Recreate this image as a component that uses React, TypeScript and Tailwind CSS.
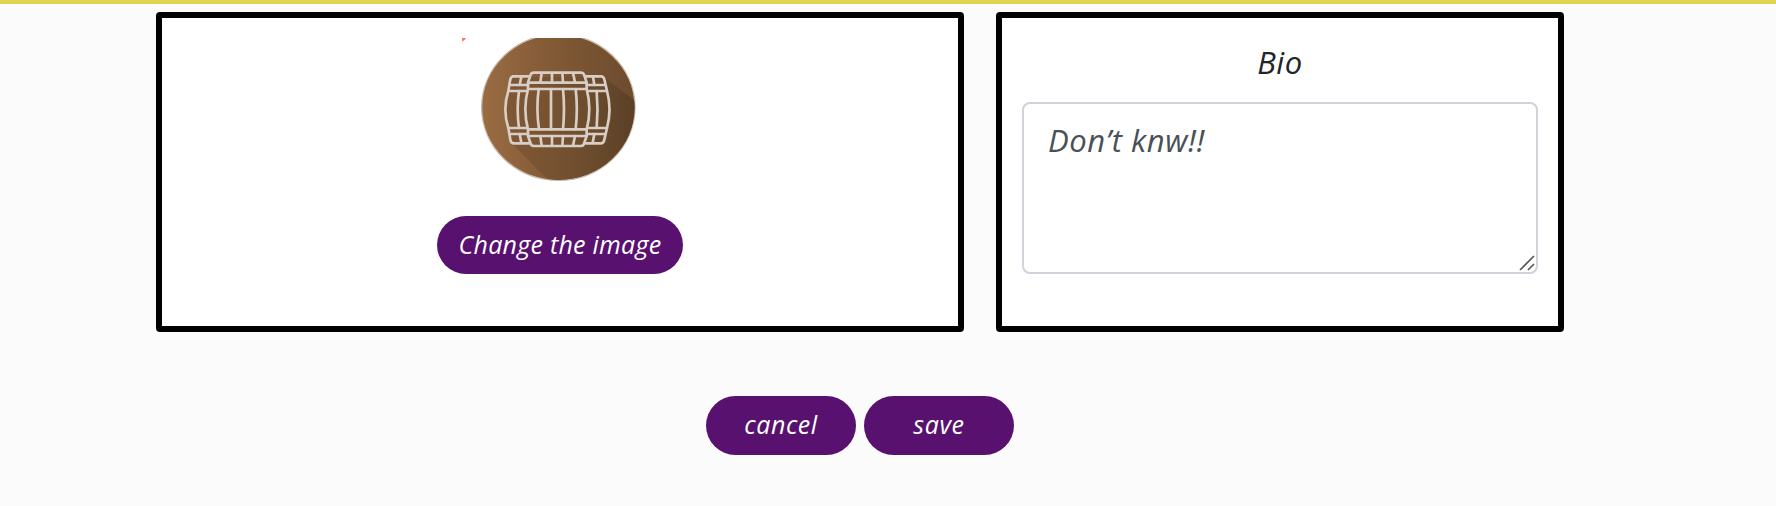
import type { ReactNode } from "react";

function BarrelBadge() {
  return (
    <svg className="block h-[146px] w-[196px] shrink-0" viewBox="66 54 588 438" fill="none">
      <defs>
        <linearGradient id="disc" x1="125" y1="0" x2="585" y2="0" gradientUnits="userSpaceOnUse">
          <stop offset="0" stopColor="#9a6c43" />
          <stop offset="0.45" stopColor="#825a36" />
          <stop offset="1" stopColor="#6c4b2d" />
        </linearGradient>
        <linearGradient id="shade" x1="210" y1="0" x2="585" y2="0" gradientUnits="userSpaceOnUse">
          <stop offset="0" stopColor="#805735" />
          <stop offset="0.5" stopColor="#71502f" />
          <stop offset="1" stopColor="#5b4027" />
        </linearGradient>
        <clipPath id="round">
          <ellipse cx="355" cy="262" rx="229" ry="218" />
        </clipPath>
      </defs>
      <path d="M66 54h12l-4 5-7 6z" fill="#ee7961" />
      <ellipse cx="355" cy="262" rx="230" ry="219" fill="url(#disc)" stroke="#c9b7a7" strokeWidth="4" />
      <g clipPath="url(#round)">
        <path d="M215 370L335 490H600V255L493 172L440 260Z" fill="url(#shade)" />
        <path d="M215 170H490Q525 270 490 370H215Q180 270 215 170Z" fill="url(#shade)" />
      </g>
      <g stroke="#d8cec5" strokeWidth="8" strokeLinejoin="round" strokeLinecap="round">
        <path d="M264 169H219Q212 171 210 182L205 213Q187 268 205 324L211 359Q213 370 222 370H268" />
        <path d="M438 169H485Q492 171 494 182L501 213Q516 268 501 324L493 359Q491 370 482 370H438" />
        <path d="M210 195H264M205 213H258M206 324H258M210 342H264M441 195H495M446 213H501M446 324H501M441 342H495" />
        <path d="M244 170L239 195M237 213Q229 268 237 324M239 342L244 368M459 170L463 195M470 213Q475 268 470 324M463 342L458 368" />
        <path d="M281 158H423Q430 158 432 164L440 187V207Q456 268 440 328V348L432 371Q430 378 423 378H281Q274 378 272 371L264 348V328Q248 268 264 207V187L272 164Q274 158 281 158Z" />
        <path d="M265 188H439M264 207H440M264 328H440M265 348H439" />
        <path d="M305 159L301 187M336 159V187M367 159L369 187M399 159L405 187M296 207Q288 268 297 328M333 207V328M369 207Q375 268 369 328M407 207Q414 268 407 328M301 348L305 377M336 348V377M369 348L367 377M405 348L399 377" />
      </g>
    </svg>
  );
}

function PillButton({ className, children }: { className: string; children: ReactNode }) {
  return (
    <button
      type="button"
      className={`flex items-center justify-center rounded-full bg-[#58116f] text-[25px] font-normal italic whitespace-nowrap text-white ${className}`}
    >
      {children}
    </button>
  );
}

export default function App() {
  return (
    <main className="h-[506px] overflow-hidden border-t-4 border-[#dfd44f] bg-[#fbfbfb] pt-2 font-['Open_Sans','Noto_Sans',sans-serif]">
      <div className="ml-[156px] flex gap-8">
        <section className="flex h-80 w-[808px] flex-col items-center rounded-[4px] border-[6px] border-black bg-white pt-5">
          <BarrelBadge />
          <PillButton className="mt-8 h-[58px] w-[246px] tracking-[0.25px]">Change the image</PillButton>
        </section>
        <section className="flex h-80 w-[568px] flex-col rounded-[4px] border-[6px] border-black bg-white px-5 pt-5">
          <h2 className="h-16 text-center text-[31px] leading-[48px] font-normal tracking-[0.6px] text-[#212529] italic">Bio</h2>
          <div className="relative h-[172px]">
            <textarea
              className="block h-full w-full resize-none rounded-lg border-2 border-[#ced4da] bg-white px-6 py-3 text-[31px] leading-[48px] font-normal tracking-[0.6px] text-[#495057] italic outline-none"
              defaultValue="Don’t knw!!"
            />
            <svg className="absolute right-[3px] bottom-[3px] size-4" viewBox="0 0 16 16" stroke="#555" strokeWidth="1.6">
              <path d="M1 15L15 1M9 15L15 9" />
            </svg>
          </div>
        </section>
      </div>
      <div className="mt-16 ml-[706px] flex gap-2">
        <PillButton className="h-[59px] w-[150px] pb-px tracking-[0.6px]">cancel</PillButton>
        <PillButton className="h-[59px] w-[150px] pb-px tracking-[0.6px]">save</PillButton>
      </div>
    </main>
  );
}
